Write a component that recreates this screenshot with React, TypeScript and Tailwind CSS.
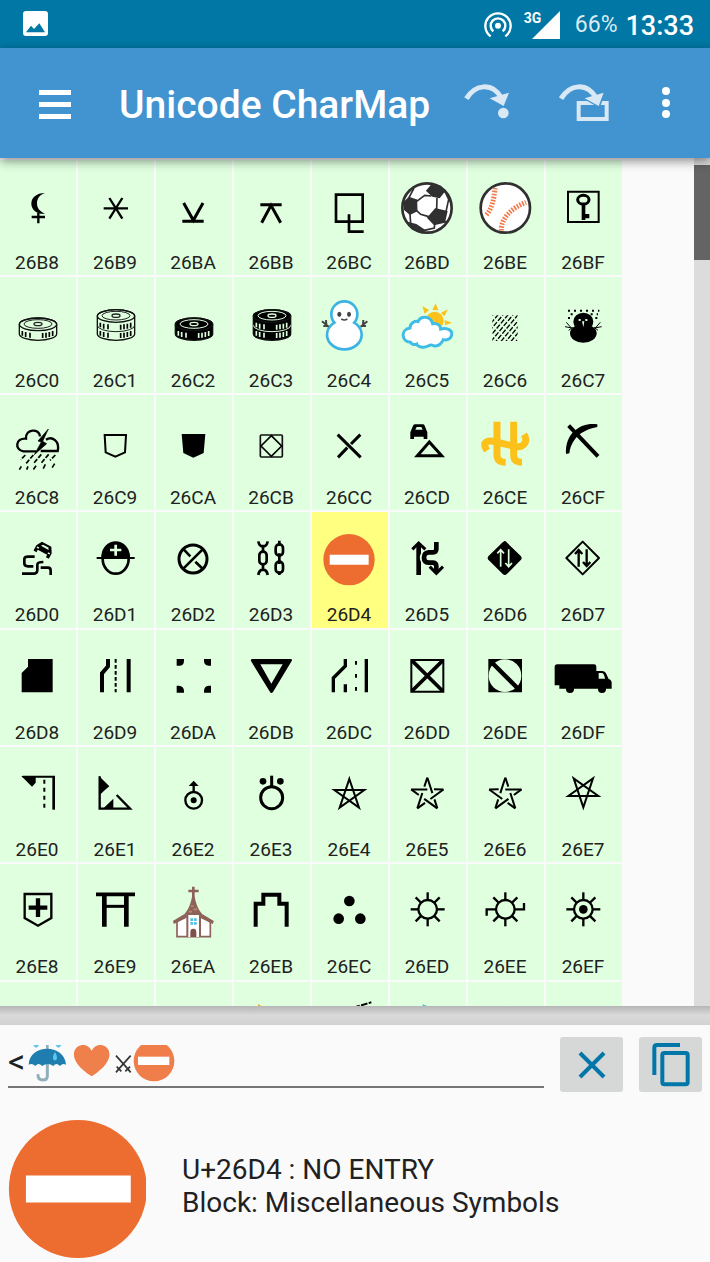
import React, { useState } from "react";

type Glyph = {
  code: string;
  name: string;
  art?: React.ReactNode;
};

const CELL = "#dfffdf";

const Line = ({ d, w = 8 }: { d: string; w?: number }) => (
  <path d={d} fill="none" stroke="#000" strokeWidth={w} />
);

// One or two draughts pieces, white or black
const Draughts = ({ dark, king }: { dark?: boolean; king?: boolean }) => {
  const top = king ? 114 : 139;
  const fg = dark ? CELL : "#222";
  const rows = king ? [134, 159] : [159];
  return (
    <g fill="none" stroke="#111" strokeWidth={4}>
      <path
        d={`M58 ${top} V168 A56 19 0 0 0 170 168 V${top} A56 19 0 0 0 58 ${top}Z`}
        fill={dark ? "#000" : "none"}
      />
      <ellipse cx={114} cy={top} rx={56} ry={19} fill={dark ? "#000" : "none"} />
      <ellipse cx={114} cy={top - 1} rx={42} ry={13} stroke={fg} strokeWidth={3} />
      <ellipse cx={114} cy={top - 1} rx={12} ry={5} stroke={fg} />
      {king && <path d="M58 142 A56 19 0 0 0 170 142" stroke={fg} strokeWidth={3} />}
      {rows.map((y) => (
        <path
          key={y}
          d={`M67 ${y} v14 M77 ${y + 3} v15 M90 ${y + 5} v15 M128 ${y + 6} v15 M138 ${y + 5} v15 M148 ${y + 3} v15 M158 ${y} v15`}
          stroke={dark ? CELL : "#000"}
          strokeWidth={5}
        />
      ))}
    </g>
  );
};

const NoEntry = () => (
  <>
    <circle cx={111} cy={143} r={77} fill="#ed6c30" />
    <path d="M53 128 H170 V158 H53Z" fill="#fff" />
  </>
);

const Gear = ({ x = 113, sides = true }: { x?: number; sides?: boolean }) => (
  <g fill="none" stroke="#000" strokeWidth={7}>
    <circle cx={x} cy={136} r={28} />
    {(sides ? [0, 45, 90, 135, 180, 225, 270, 315] : [45, 90, 135, 225, 270, 315]).map((a) => (
      <path key={a} d={`M${x + 29} 136 H${x + 51}`} transform={`rotate(${a} ${x} 136)`} />
    ))}
  </g>
);

const Interlaced = ({ flip }: { flip?: boolean }) => (
  <g transform={flip ? "matrix(-1 0 0 1 224 0)" : undefined}>
    {[0, 72, 144, 216, 288].map((a) => (
      <path
        key={a}
        d="M112 92 L121 119 M127 138 L142 184"
        stroke="#000"
        strokeWidth={6}
        transform={`rotate(${a} 112 143)`}
      />
    ))}
  </g>
);

const glyphs: Glyph[] = [
  {
    code: "26B8",
    name: "BLACK MOON LILITH",
    art: (
      <>
        <path d="M135 99 C108 99 94 114 94 131 C94 148 110 164 135 161 C119 154 111 145 111 130 C111 116 119 104 135 99Z" />
        <Line d="M115 158 V190 M95 171 H135" w={7} />
      </>
    ),
  },
  { code: "26B9", name: "SEXTILE", art: <Line d="M77 145 H150 M94 114 L133 176 M133 114 L94 176" w={7} /> },
  { code: "26BA", name: "SEMISEXTILE", art: <Line d="M83 129 L112 181 L141 129 M79 184 H143" w={9} /> },
  { code: "26BB", name: "QUINCUNX", art: <Line d="M83 188 L111 136 L140 188 M79 134 H143" w={9} /> },
  { code: "26BC", name: "SESQUIQUADRATE", art: <Line d="M72 104 H152 V185 H72Z M111 163 V215 H155" /> },
  {
    code: "26BD",
    name: "SOCCER BALL",
    art: (
      <g stroke="#303030" strokeWidth={5} fill="#303030">
        <circle cx={111} cy={144} r={74} fill="#fff" strokeWidth={8} />
        <path d="M111 92 L127 73 L150 79 L164 92 L148 112 L128 108Z" />
        <path d="M44 126 L57 113 L79 120 L80 152 L60 162 L44 148Z" />
        <path d="M137 147 L170 155 L163 186 L133 193 L114 173Z" />
        <path d="M52 188 L78 194 L103 211 L90 216 L66 206Z" />
        <path
          d="M80 124 L104 106 L124 108 M80 152 L92 163 L116 170 M141 114 L140 148 M57 113 L72 84 M60 162 L62 190 M103 211 L133 204 L134 192 M164 92 L176 118 L168 155 M176 118 L184 128 M163 186 L172 184"
          fill="none"
        />
      </g>
    ),
  },
  {
    code: "26BE",
    name: "BASEBALL",
    art: (
      <>
        <circle cx={112} cy={144} r={74} fill="#fff" stroke="#303030" strokeWidth={8} />
        <g fill="none" stroke="#f2794a">
          <path d="M82 84 C78 100 78 140 54 166" strokeWidth={15} strokeDasharray="5 4" />
          <path d="M100 212 C98 176 130 144 174 127" strokeWidth={15} strokeDasharray="5 4" />
        </g>
      </>
    ),
  },
  {
    code: "26BF",
    name: "SQUARED KEY",
    art: (
      <>
        <Line d="M66 95 H158 V186 H66Z" w={6} />
        <ellipse cx={112} cy={119} rx={17} ry={13} fill="none" stroke="#000" strokeWidth={9} />
        <path d="M107 132 H118 V162 H130 V175 H118 V180 H107Z" />
      </>
    ),
  },
  { code: "26C0", name: "WHITE DRAUGHTS MAN", art: <Draughts /> },
  { code: "26C1", name: "WHITE DRAUGHTS KING", art: <Draughts king /> },
  { code: "26C2", name: "BLACK DRAUGHTS MAN", art: <Draughts dark /> },
  { code: "26C3", name: "BLACK DRAUGHTS KING", art: <Draughts dark king /> },
  {
    code: "26C4",
    name: "SNOWMAN WITHOUT SNOW",
    art: (
      <>
        <g stroke="#3db3e3" strokeWidth={16}>
          <ellipse cx={97} cy={170} rx={48} ry={40} />
          <circle cx={97} cy={109} r={35} />
        </g>
        <g fill="#fff">
          <ellipse cx={97} cy={170} rx={48} ry={40} />
          <circle cx={97} cy={109} r={35} />
        </g>
        <g fill="none" stroke="#444" strokeWidth={6}>
          <path d="M30 130 L50 146 M42 126 L43 140 M34 144 L47 144 M166 130 L146 146 M154 126 L153 140 M162 144 L149 144" />
          <path d="M88 123 Q97 129 106 123" strokeWidth={5} />
        </g>
        <ellipse cx={82} cy={109} rx={6} ry={8} fill="#444" />
        <ellipse cx={111} cy={109} rx={6} ry={8} fill="#444" />
      </>
    ),
  },
  {
    code: "26C5",
    name: "SUN BEHIND CLOUD",
    art: (
      <>
        <g fill="#fcc21b">
          <circle cx={134} cy={128} r={27} />
          <path d="M127 96 L137 76 L145 97Z M97 84 L117 96 L104 108Z M153 104 L174 94 L163 115Z M164 126 L186 134 L165 142Z" />
        </g>
        <path
          d="M62 193 C32 190 32 154 60 150 C60 134 76 128 84 131 C92 112 122 112 128 137 C144 134 152 144 152 153 C174 148 190 158 184 174 C181 184 170 188 160 185 C154 198 144 206 130 203 C120 198 124 202 114 204 C100 212 82 206 80 198 C72 202 64 198 62 193Z"
          fill="#fff"
          stroke="#40bde6"
          strokeWidth={9}
        />
      </>
    ),
  },
  {
    code: "26C6",
    name: "RAIN",
    art: (
      <svg x={73} y={112} width={76} height={77} viewBox="0 0 76 77">
        {[0, 15, 30, 45, 60, 75, 90, 105, 120, 135].map((c, i) => (
          <path
            key={c}
            d={`M${c - 64} 78 L${c + 4} -4`}
            stroke="#000"
            strokeWidth={4}
            strokeDasharray="15 5"
            strokeDashoffset={(i % 2) * 10}
          />
        ))}
      </svg>
    ),
  },
  {
    code: "26C7",
    name: "BLACK SNOWMAN",
    art: (
      <>
        <ellipse cx={112} cy={166} rx={40} ry={28} />
        <ellipse cx={112} cy={131} rx={30} ry={27} />
        <path d="M61 133 L76 150 M57 146 L78 150 M68 157 L80 148 M163 133 L148 150 M167 146 L146 150 M156 157 L144 148" stroke="#000" strokeWidth={3} />
        <path
          d="M66 98 H160 M66 120 H80 M148 120 H162 M74 109 H92 M134 109 H156"
          stroke="#000"
          strokeWidth={6}
          strokeDasharray="6 12"
        />
        <path d="M98 123 h6 v6 h-6z M118 123 h6 v6 h-6z M108 130 h7 l-3 18z" fill={CELL} />
      </>
    ),
  },
  {
    code: "26C8",
    name: "THUNDER CLOUD AND RAIN",
    art: (
      <>
        <Line d="M70 169 C43 165 46 128 78 131 C76 101 118 99 120 124 M138 134 C156 122 180 138 173 168 H122 M68 169 H108" w={7} />
        <path d="M145 102 L114 138 L124 141 L103 179 L140 146 L128 139Z" stroke="#000" strokeWidth={2} />
        <path
          d="M76 180 L62 194 M100 180 L78 206 M124 178 L100 206 M146 178 L122 206 M166 180 L150 196 M164 206 L154 222 M64 214 L58 224 M84 214 L80 224 M108 212 L100 224 M136 208 L128 224"
          stroke="#000"
          strokeWidth={5}
          strokeDasharray="14 5"
        />
      </>
    ),
  },
  { code: "26C9", name: "TURNED WHITE SHOGI PIECE", art: <Line d="M80 120 H144 L141 172 L112 185 L83 172Z" w={6} /> },
  { code: "26CA", name: "TURNED BLACK SHOGI PIECE", art: <path d="M77 117 H148 L143 174 L112 188 L82 174Z" /> },
  {
    code: "26CB",
    name: "WHITE DIAMOND IN SQUARE",
    art: (
      <>
        <rect x={79} y={120} width={66} height={66} rx={3} fill="none" stroke="#111" strokeWidth={5} />
        <Line d="M112 122 L143 153 L112 184 L81 153Z" w={5} />
      </>
    ),
  },
  { code: "26CC", name: "CROSSING LANES", art: <Line d="M77 119 L146 187 M145 119 L117 147 M106 158 L78 187" w={9} /> },
  {
    code: "26CD",
    name: "DISABLED CAR",
    art: (
      <>
        <path d="M61 112 L69 92 Q71 88 76 88 H98 Q103 88 104 92 L112 112 V132 H101 V125 H72 V132 H61Z" />
        <path d="M76 104 L80 96 H94 L98 104Z" fill={CELL} />
        <Line d="M118 141 L155 182 H82Z" w={9} />
      </>
    ),
  },
  {
    code: "26CE",
    name: "OPHIUCHUS",
    art: (
      <g fill="none" stroke="#fcc21b" strokeWidth={21}>
        <path d="M87 80 V182 Q88 202 113 202" />
        <path d="M137 80 V182 Q138 202 162 202" />
        <path d="M57 167 C40 140 58 134 84 141 L140 154 C166 160 182 140 168 118" />
      </g>
    ),
  },
  {
    code: "26CF",
    name: "PICK",
    art: (
      <>
        <Line d="M68 92 L156 184" w={12} />
        <path d="M154 88 C112 80 56 108 60 177 L70 175 C76 136 100 106 154 96Z" />
      </>
    ),
  },
  {
    code: "26D0",
    name: "CAR SLIDING",
    art: (
      <>
        <Line d="M104 134 H84 Q73 134 73 142 V154 Q73 163 84 163 H100 M66 185 H100 Q112 185 112 174 V158 Q112 150 130 150 M122 167 H144 Q152 167 152 176 V189" w={8} />
        <g transform="rotate(28 132 112)">
          <path d="M106 112 L116 95 H148 L158 112 V130 H148 V122 H116 V130 H106Z" />
          <path d="M119 107 L123 101 H141 L145 107Z" fill={CELL} />
          <path d="M110 114 h7 v4 h-7z M147 114 h7 v4 h-7z" fill={CELL} />
        </g>
      </>
    ),
  },
  {
    code: "26D1",
    name: "HELMET WITH WHITE CROSS",
    art: (
      <>
        <ellipse cx={113} cy={140} rx={39} ry={45} fill="none" stroke="#000" strokeWidth={8} />
        <path d="M56 135 H70 C72 72 154 72 156 135 H170 V141 H56Z" />
        <path d="M113 98 V131 M96 114 H130" stroke={CELL} strokeWidth={8} />
      </>
    ),
  },
  {
    code: "26D2",
    name: "CIRCLED CROSSING LANES",
    art: (
      <>
        <circle cx={111} cy={141} r={42} fill="none" stroke="#000" strokeWidth={9} />
        <Line d="M82 170 L140 112 M83 112 L103 133 M118 149 L140 170" />
      </>
    ),
  },
  {
    code: "26D3",
    name: "CHAINS",
    art: (
      <g fill="none" stroke="#000" strokeWidth={8}>
        <path d="M73 88 Q75 102 87 104 Q99 102 101 88 M87 98 V122 M87 154 V178 M73 189 Q75 174 87 173 Q99 174 101 189" />
        <rect x={76} y={119} width={22} height={38} rx={11} />
        <rect x={125} y={97} width={22} height={34} rx={11} />
        <rect x={125} y={149} width={22} height={34} rx={11} />
        <path d="M136 86 V102 M136 124 V156 M136 178 V189" />
      </g>
    ),
  },
  { code: "26D4", name: "NO ENTRY", art: <NoEntry /> },
  {
    code: "26D5",
    name: "ALTERNATE ONE-WAY LEFT WAY TRAFFIC",
    art: (
      <>
        <Line d="M67 112 L86 93 L106 112" w={9} />
        <path d="M79 98 H93 V124 Q86 138 93 150 V189 H79Z" />
        <path
          d="M139 90 V111 Q139 121 129 121 H116 Q102 122 102 137 Q102 151 116 152 H129 Q139 153 139 163 V178"
          fill="none"
          stroke="#000"
          strokeWidth={14}
        />
        <Line d="M119 164 L139 184 L159 164" w={9} />
      </>
    ),
  },
  {
    code: "26D6",
    name: "BLACK TWO-WAY LEFT WAY TRAFFIC",
    art: (
      <>
        <path d="M110 87 Q113 87 116 91 L159 133 Q163 139 159 143 L116 187 Q110 191 105 187 L61 143 Q57 139 61 133 L104 91Z" />
        <path d="M98 164 V116 M88 124 L98 113 L108 124 M122 112 V160 M112 153 L122 164 L132 153" fill="none" stroke={CELL} strokeWidth={5} />
      </>
    ),
  },
  {
    code: "26D7",
    name: "WHITE TWO-WAY LEFT WAY TRAFFIC",
    art: (
      <>
        <path d="M110 89 L159 138 L110 187 L61 138Z" fill="none" stroke="#000" strokeWidth={6} strokeLinejoin="round" />
        <Line d="M98 164 V118 M122 112 V158 M87 126 L98 114 L109 126 M111 150 L122 162 L133 150" w={7} />
      </>
    ),
  },
  { code: "26D8", name: "BLACK LEFT LANE MERGE", art: <path d="M84 87 H158 V187 H65 V129 L84 110Z" /> },
  {
    code: "26D9",
    name: "WHITE LEFT LANE MERGE",
    art: (
      <>
        <Line d="M90 87 V109 L72 130 V187 M152 87 V187" w={12} />
        <path d="M113 87 V187" stroke="#000" strokeWidth={6} strokeDasharray="11 7" />
      </>
    ),
  },
  {
    code: "26DA",
    name: "DRIVE SLOW SIGN",
    art: (
      <path d="M62 87 H84 V92 Q84 107 70 107 H62Z M144 87 H165 V107 H158 Q144 106 144 92Z M62 167 H68 Q84 168 84 183 V188 H62Z M165 167 V188 H144 V183 Q144 168 158 167Z" />
    ),
  },
  {
    code: "26DB",
    name: "HEAVY WHITE DOWN-POINTING TRIANGLE",
    art: <path fillRule="evenodd" d="M54 87 H170 Q176 88 173 93 L117 186 Q112 192 108 186 L51 93 Q49 88 54 87Z M79 103 H146 L112 161Z" />,
  },
  {
    code: "26DC",
    name: "LEFT CLOSED ENTRY",
    art: (
      <>
        <Line d="M64 187 V144 L100 108 V87 M100 163 V187 M163 87 V187" w={10} />
        <path d="M132 93 V187" stroke="#000" strokeWidth={6} strokeDasharray="11 28" />
      </>
    ),
  },
  {
    code: "26DD",
    name: "SQUARED SALTIRE",
    art: (
      <>
        <Line d="M64 90 H160 V185 H64Z" w={6} />
        <Line d="M66 92 L158 183 M158 92 L66 183" w={11} />
      </>
    ),
  },
  {
    code: "26DE",
    name: "FALLING DIAGONAL IN WHITE CIRCLE",
    art: (
      <>
        <path d="M61 87 H162 V187 H61Z" />
        <circle cx={111} cy={137} r={49} fill={CELL} />
        <Line d="M70 96 L152 178" w={13} />
      </>
    ),
  },
  {
    code: "26DF",
    name: "BLACK TRUCK",
    art: (
      <>
        <path d="M34 103 H144 Q151 103 151 110 V123 H168 Q178 123 182 134 L188 147 Q197 150 197 158 V176 H40 V166 H26 V111 Q26 103 34 103Z" />
        <circle cx={72} cy={177} r={12} />
        <circle cx={168} cy={177} r={12} />
        <path d="M158 129 H168 Q174 130 177 146 H158Z" fill={CELL} />
      </>
    ),
  },
  {
    code: "26E0",
    name: "RESTRICTED LEFT ENTRY-1",
    art: (
      <>
        <Line d="M68 89 H165" w={6} />
        <Line d="M161 88 V188" w={8} />
        <path d="M64 87 H107 V107 L96 119Z" />
        <path d="M133 98 V182" stroke="#000" strokeWidth={6} strokeDasharray="12 12" />
      </>
    ),
  },
  {
    code: "26E1",
    name: "RESTRICTED LEFT ENTRY-2",
    art: (
      <>
        <Line d="M65 88 V185 H156 L116 144" w={7} />
        <path d="M63 87 L94 118 L80 130 L65 144Z M75 185 L106 155 V185Z" />
      </>
    ),
  },
  {
    code: "26E2",
    name: "ASTRONOMICAL SYMBOL FOR URANUS",
    art: (
      <>
        <circle cx={113} cy={160} r={25} fill="none" stroke="#000" strokeWidth={7} />
        <circle cx={113} cy={160} r={9} />
        <Line d="M113 136 V108" w={7} />
        <path d="M98 117 L113 101 L128 117Z" />
      </>
    ),
  },
  {
    code: "26E3",
    name: "HEAVY CIRCLE WITH STROKE AND TWO DOTS ABOVE",
    art: (
      <>
        <circle cx={113} cy={152} r={33} fill="none" stroke="#000" strokeWidth={9} />
        <Line d="M113 86 V120" w={9} />
        <circle cx={87} cy={103} r={10} />
        <circle cx={139} cy={103} r={10} />
      </>
    ),
  },
  { code: "26E4", name: "PENTAGRAM", art: <Line d="M112 96 L141 182 L67 129 H157 L83 182Z" w={6} /> },
  { code: "26E5", name: "RIGHT-HANDED INTERLACED PENTAGRAM", art: <Interlaced flip /> },
  { code: "26E6", name: "LEFT-HANDED INTERLACED PENTAGRAM", art: <Interlaced /> },
  { code: "26E7", name: "INVERTED PENTAGRAM", art: <Line d="M112 181 L83 94 L157 147 H67 L141 94Z" w={6} /> },
  {
    code: "26E8",
    name: "BLACK CROSS ON SHIELD",
    art: (
      <>
        <Line d="M74 90 H154 V162 L114 185 L74 162Z" w={7} />
        <Line d="M114 103 V159 M86 131 H142" w={13} />
      </>
    ),
  },
  {
    code: "26E9",
    name: "SHINTO SHRINE",
    art: (
      <>
        <Line d="M54 91 H171" w={11} />
        <Line d="M79 92 V188 M145 92 V188" w={14} />
        <Line d="M79 127 H145" w={9} />
      </>
    ),
  },
  {
    code: "26EA",
    name: "CHURCH",
    art: (
      <>
        <path d="M63 172 L94 156 H130 L163 172 V218 H63Z" fill="#fff" stroke="#8d6259" strokeWidth={5} />
        <path d="M94 219 V150 H132 V219" fill="#fff" stroke="#8d6259" strokeWidth={6} />
        <path d="M112 68 V104 M97 81 H128" stroke="#8d6259" strokeWidth={8} />
        <path d="M108 98 H116 C120 120 126 134 138 150 H86 C98 134 104 120 108 98Z" fill="#8d6259" />
        <path d="M90 150 L90 160 L55 177 L53 172Z M134 150 V160 L169 177 L171 172Z" fill="#8d6259" stroke="#8d6259" strokeWidth={4} />
        <path d="M105 126 h8 M112 136 h12 M98 143 h10" stroke="#b98b6c" strokeWidth={5} />
        <path d="M103 219 V204 Q103 194 112 194 Q121 194 121 204 V219Z" fill="#7b5149" />
        <path d="M103 163 h8 v8 h-8z M114 163 h8 v8 h-8z M103 174 h8 v8 h-8z M114 174 h8 v8 h-8z" fill="#4fc0e8" />
      </>
    ),
  },
  { code: "26EB", name: "CASTLE", art: <Line d="M65 188 V119 H88 V92 H136 V119 H158 V188" w={12} /> },
  {
    code: "26EC",
    name: "HISTORIC SITE",
    art: (
      <>
        <circle cx={112} cy={111} r={16} />
        <circle cx={80} cy={164} r={16} />
        <circle cx={145} cy={164} r={16} />
      </>
    ),
  },
  { code: "26ED", name: "GEAR WITHOUT HUB", art: <Gear /> },
  {
    code: "26EE",
    name: "GEAR WITH HANDLES",
    art: (
      <>
        <Gear x={112} sides={false} />
        <Line d="M83 136 H56 V155 M141 136 H168 V117" w={7} />
      </>
    ),
  },
  {
    code: "26EF",
    name: "MAP SYMBOL FOR LIGHTHOUSE",
    art: (
      <>
        <Gear x={112} />
        <circle cx={112} cy={136} r={13} />
      </>
    ),
  },
  { code: "26F0", name: "MOUNTAIN" },
  { code: "26F1", name: "UMBRELLA ON GROUND" },
  { code: "26F2", name: "FOUNTAIN" },
  { code: "26F3", name: "FLAG IN HOLE", art: <path d="M72 66 L112 90 L72 110Z" fill="#f5a623" /> },
  {
    code: "26F4",
    name: "FERRY",
    art: (
      <>
        <path d="M124 77 L178 61" stroke="#000" strokeWidth={6} strokeDasharray="20 4" />
        <path d="M60 120 H160 L146 160 H74Z" />
      </>
    ),
  },
  { code: "26F5", name: "SAILBOAT", art: <path d="M98 67 L112 72 C126 90 140 130 146 150 H98Z" fill="#40bde6" /> },
  { code: "26F6", name: "SQUARE FOUR CORNERS" },
  { code: "26F7", name: "SKIER" },
];

// Rows above this index show their code under the glyph
const LABELLED = 56;

const StatusBar = () => (
  <div className="flex h-12 shrink-0 items-center bg-[#0077a4] pt-px pr-4 pl-[23px] text-white">
    <svg className="mb-0.5 size-[25px]" viewBox="0 0 75 75">
      <rect width={75} height={75} rx={9} fill="#fff" />
      <path d="M9 64 L24 44 L33 54 L49 37 L66 64Z" fill="#0077a4" />
    </svg>
    <svg className="ml-auto h-7 w-7" viewBox="0 0 84 84" fill="none" stroke="#fff" strokeWidth={7}>
      <circle cx={42} cy={44} r={9} fill="#fff" stroke="none" />
      <path d="M28 61 A22 22 0 1 1 56 61" />
      <path d="M20 76 A38 38 0 1 1 64 76" />
    </svg>
    <div className="relative ml-3 h-7 w-9">
      <span className="absolute top-0 left-0 text-sm leading-[14px] font-bold">3G</span>
      <svg className="ml-2 h-7 w-7" viewBox="0 0 28 28">
        <path d="M28 0 V28 H0Z" fill="#fff" />
      </svg>
    </div>
    <span className="ml-[15px] text-[23px] leading-7 text-[#d9ebf3]">66%</span>
    <span className="ml-2 pt-0.5 text-[27px] leading-7 font-medium">13:33</span>
  </div>
);

const Toolbar = () => (
  <header className="relative z-10 flex h-[110px] shrink-0 items-center bg-[#4294d1] pr-9 pl-[39px] text-white shadow-[0_3px_10px_rgba(0,0,0,0.45)]">
    <button aria-label="Open menu" className="flex w-8 flex-col gap-[7px] pt-0.5">
      <span className="h-[5px] bg-white" />
      <span className="h-[5px] bg-white" />
      <span className="h-[5px] bg-white" />
    </button>
    <h1 className="ml-12 flex-1 pt-1 text-[39px] leading-[48px] font-medium whitespace-nowrap">
      Unicode CharMap
    </h1>
    <div className="flex items-center gap-12">
      <button aria-label="Go to character">
        <svg className="h-10 w-[47px]" viewBox="324 248 141 120" fill="#d9e8f5">
          <path d="M334 295 C360 252 412 244 440 294" fill="none" stroke="#d9e8f5" strokeWidth={15} />
          <path d="M404 294 L462 277 L446 317Z" />
          <circle cx={445} cy={338} r={16} />
        </svg>
      </button>
      <button aria-label="Go to block">
        <svg className="h-10 w-[52px]" viewBox="609 248 156 120" fill="#d9e8f5">
          <path d="M671 308 H755 V356 H671Z" fill="none" stroke="#d9e8f5" strokeWidth={12} />
          <path d="M690 294 L746 277 L732 317Z" stroke="#4294d1" strokeWidth={8} />
          <path d="M618 295 C644 252 696 244 724 294" fill="none" stroke="#d9e8f5" strokeWidth={15} />
          <path d="M689 294 L746 277 L731 317Z" />
        </svg>
      </button>
      <button aria-label="More options">
        <svg className="h-10 w-4" viewBox="0 0 16 40" fill="#fff">
          <circle cx={8} cy={8} r={4} />
          <circle cx={8} cy={20} r={4} />
          <circle cx={8} cy={31} r={4} />
        </svg>
      </button>
    </div>
  </header>
);

// Characters picked so far: umbrella, heart, swords, no entry
const PickedChars = () => (
  <svg className="pointer-events-none absolute top-2 left-5 h-[38px] w-[147px]" viewBox="84 75 441 114">
    <path d="M142 75 V90" stroke="#8fb0b8" strokeWidth={8} />
    <path d="M142 130 V168 Q142 180 129 180 Q114 180 114 166" fill="none" stroke="#8fb0b8" strokeWidth={9} strokeLinecap="round" />
    <path d="M86 134 C88 70 194 70 198 134 Q188 128 180 138 Q168 126 160 138 Q144 126 126 138 Q116 126 106 138 Q96 128 86 134Z" fill="#1f7db0" />
    <path d="M165 96 C174 110 172 121 165 121 C158 121 156 110 165 96Z M100 75 H117 Q108 92 100 75Z M167 75 H184 Q175 92 167 75Z" fill="#5cc7ec" />
    <path d="M275 169 C220 134 216 104 226 88 C238 68 266 72 275 92 C284 72 312 68 324 88 C334 104 330 134 275 169Z" fill="#ef7f4b" />
    <path d="M348 107 L388 152 M392 107 L352 152 M350 140 L364 154 M390 140 L376 154 M348 157 L355 149 M392 157 L385 149" fill="none" stroke="#333" strokeWidth={5} />
    <circle cx={462} cy={123} r={61} fill="#ef7e4b" />
    <path d="M414 110 H508 V135 H414Z" fill="#fff" />
  </svg>
);

export default function App() {
  const [selected, setSelected] = useState("26D4");
  const [text, setText] = useState("<");
  const current = glyphs.find((g) => g.code === selected) ?? glyphs[0];

  return (
    <div className="flex h-screen flex-col overflow-hidden bg-[#fafafa] font-[Roboto,sans-serif] text-[#212121]">
      <StatusBar />
      <Toolbar />

      <main className="flex min-h-0 flex-1 justify-between overflow-hidden">
        <div className="grid h-[939px] grid-cols-[repeat(8,76px)] grid-rows-8 gap-[2px] pt-[2px]">
          {glyphs.map((g, i) => (
            <button
              key={g.code}
              title={g.name}
              aria-label={`${g.code} ${g.name}`}
              aria-pressed={g.code === selected}
              onClick={() => setSelected(g.code)}
              className={g.code === selected ? "bg-[#ffff80]" : "bg-[#dfffdf]"}
            >
              <svg className="h-[90px] w-[76px]" viewBox="0 0 228 270">
                {g.art}
              </svg>
              <span className="block h-[25px] pr-0.5 text-center text-[19px] leading-[25px]">
                {i < LABELLED && g.code}
              </span>
            </button>
          ))}
        </div>
        <div className="w-4 bg-[#dcdcdc] pt-[7px]">
          <div className="h-[95px] bg-[#646464]" />
        </div>
      </main>

      <div className="h-[19px] shrink-0 bg-linear-to-b from-[#b6b6b6] via-[#dadada] to-[#d2d2d2]" />

      <footer className="shrink-0 px-2 pt-3 pb-[3px]">
        <div className="flex gap-4">
          <div className="relative mb-1 flex-1 border-b-2 border-[#757575]">
            <input
              aria-label="Collected characters"
              value={text}
              onChange={(e) => setText(e.target.value)}
              className="h-[49px] w-full bg-transparent text-[34px] outline-none"
            />
            <PickedChars />
          </div>
          <button
            aria-label="Clear"
            onClick={() => setText("")}
            className="flex h-[55px] w-[63px] items-center justify-center rounded-[3px] bg-[#d6d7d7]"
          >
            <svg className="h-7 w-7" viewBox="0 0 28 28" fill="none" stroke="#0077a8" strokeWidth={4}>
              <path d="M2 2 L26 26 M26 2 L2 26" />
            </svg>
          </button>
          <button
            aria-label="Copy"
            className="flex h-[55px] w-[63px] items-center justify-center rounded-[3px] bg-[#d6d7d7]"
          >
            <svg className="h-11 w-[38px]" viewBox="0 0 114 132" fill="none" stroke="#0077a8" strokeWidth={12}>
              <path d="M7 96 V14 Q7 6 15 6 H84" />
              <rect x={31} y={30} width={76} height={94} rx={6} />
            </svg>
          </button>
        </div>
        <div className="mt-[27px] flex items-center gap-9">
          <svg className="h-[140px] w-[138px]" viewBox="33 65 154 156">
            {current.art}
          </svg>
          <p className="pb-1.5 text-[28px] leading-[33px]">
            U+{current.code} : {current.name}
            <br />
            Block: Miscellaneous Symbols
          </p>
        </div>
      </footer>
    </div>
  );
}
